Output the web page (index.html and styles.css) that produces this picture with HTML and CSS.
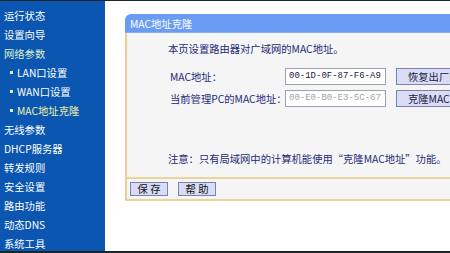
FILE: index.html
```html
<!DOCTYPE html>
<html lang="zh-CN">
<head>
<meta charset="utf-8">
<title>MAC地址克隆</title>
<link rel="stylesheet" href="styles.css">
</head>
<body>
<div class="frame">
  <nav class="side">
    <div class="item">运行状态</div>
    <div class="item">设置向导</div>
    <div class="item open">网络参数</div>
    <div class="item sub"><span class="dot"></span>LAN口设置</div>
    <div class="item sub"><span class="dot"></span>WAN口设置</div>
    <div class="item sub active"><span class="dot"></span>MAC地址克隆</div>
    <div class="item">无线参数</div>
    <div class="item">DHCP服务器</div>
    <div class="item">转发规则</div>
    <div class="item">安全设置</div>
    <div class="item">路由功能</div>
    <div class="item">动态DNS</div>
    <div class="item">系统工具</div>
  </nav>
  <main class="main">
    <section class="panel">
      <div class="panel-head">MAC地址克隆</div>
      <div class="panel-body">
        <p class="intro">本页设置路由器对广域网的MAC地址。</p>
        <div class="form">
          <div class="row">
            <span class="label">MAC地址：</span>
            <span class="input">00-1D-0F-87-F6-A9</span>
            <span class="btn wide">恢复出厂MAC地址</span>
          </div>
          <div class="row">
            <span class="label">当前管理PC的MAC地址：</span>
            <span class="input dim">00-E0-B0-E3-5C-67</span>
            <span class="btn wide">克隆MAC地址</span>
          </div>
        </div>
        <p class="note">注意：只有局域网中的计算机能使用“克隆MAC地址”功能。</p>
      </div>
      <div class="panel-foot">
        <span class="btn small">保 存</span>
        <span class="btn small">帮 助</span>
      </div>
    </section>
  </main>
</div>
</body>
</html>
```

FILE: styles.css
```css
* { box-sizing: border-box; }
html, body { margin: 0; padding: 0; background: #fff; }
body {
  width: 450px;
  height: 253px;
  overflow: hidden;
  font-family: "Noto Sans CJK SC", "Liberation Sans", sans-serif;
  font-size: 10.3px;
}
.frame {
  display: flex;
  height: 253px;
  border-top: 1px solid #16262a;
  border-bottom: 2px solid #16262a;
}
.side {
  width: 105px;
  flex: none;
  background: #0b56b0;
  padding-top: 5px;
  color: #ffffff;
}
.item {
  height: 19px;
  line-height: 19px;
  padding-left: 4px;
  white-space: nowrap;
  display: flex;
  align-items: center;
}
.item.open { color: #d8f0cc; }
.item.sub { padding-left: 10px; }
.item.active { color: #f2f2a8; }
.dot {
  width: 3px;
  height: 3px;
  background: #e8ecb0;
  margin-right: 4px;
}
.main {
  flex: 1;
  overflow: hidden;
  padding: 13px 0 0 20px;
}
.panel {
  width: 360px;
}
.panel-head {
  height: 19px;
  line-height: 19px;
  background: #6a9cf4;
  border-top-left-radius: 6px;
  color: #ffffff;
  padding-left: 5px;
  border-bottom: 1px solid #86aef0;
}
.panel-body {
  background: #f5f5f5;
  border-left: 2px solid #f6c994;
  padding: 8px 0 9px 41px;
  height: 144px;
  color: #1d2b78;
}
.intro, .note {
  margin: 0;
  line-height: 16px;
  white-space: nowrap;
}
.form {
  margin: 11px 0 0 2px;
  display: flex;
  flex-direction: column;
  gap: 5px;
}
.row {
  display: flex;
  align-items: center;
  height: 17px;
}
.label {
  width: 115px;
  flex: none;
  white-space: nowrap;
}
.input {
  width: 101px;
  height: 17px;
  flex: none;
  background: #fff;
  border: 1px solid #9aa2b4;
  font-family: "Liberation Mono", monospace;
  font-size: 9px;
  line-height: 15px;
  padding-left: 3px;
  color: #1a1a40;
}
.input.dim { color: #a0a4b0; }
.btn {
  background: #d9dcf6;
  border: 1px solid #7a82a8;
  color: #1a1a40;
  white-space: nowrap;
  display: inline-block;
}
.btn.wide {
  margin-left: 10px;
  height: 17px;
  line-height: 15px;
  padding-left: 11px;
  width: 100px;
  flex: none;
}
.note { margin-top: 44px; }
.panel-foot {
  background: #f5f5f5;
  border-left: 2px solid #f6c994;
  border-top: 2px solid #e9d49e;
  border-bottom: 2px solid #e9d49e;
  height: 24px;
  padding: 3px 0 0 3px;
  display: flex;
  gap: 10px;
  align-items: flex-start;
}
.btn.small {
  width: 38px;
  height: 14px;
  line-height: 12px;
  text-align: center;
  color: #111;
}
```
